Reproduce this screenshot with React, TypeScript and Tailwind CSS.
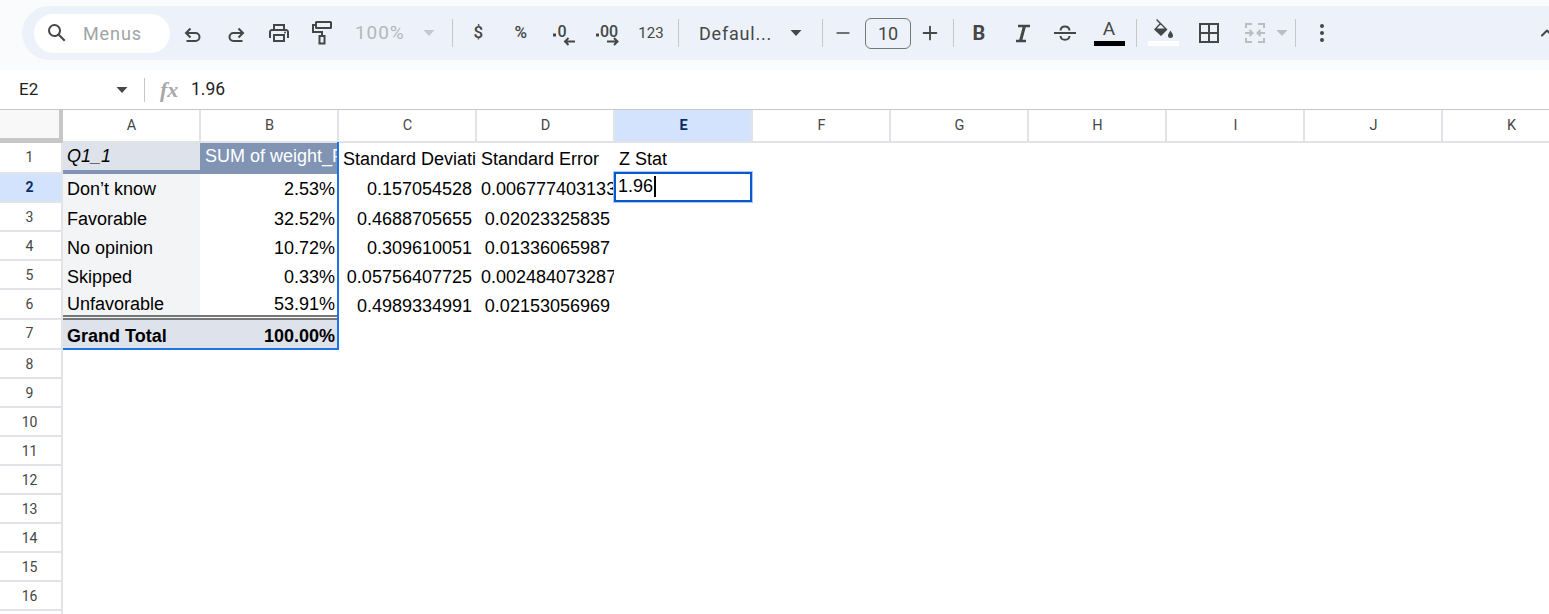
import React from 'react';
import { ChevronUp, Plus, Minus } from 'lucide-react';

const ICON = '#444746';
const DISABLED = '#b9bcc0';

const Sep = ({ className = '' }: { className?: string }) => <div className={`w-px h-[28px] bg-[#c7c7c7] shrink-0 ${className}`} />;

const Caret = ({ color = ICON, className = '' }: { color?: string; className?: string }) => (
  <svg width="12" height="6" viewBox="0 0 12 6" className={`shrink-0 ${className}`}>
    <path d="M0.5 0 H11.5 L6 6 Z" fill={color} />
  </svg>
);

const Btn = ({ className, children }: { className: string; children: React.ReactNode }) => (
  <div className={`h-full flex items-center justify-center shrink-0 ${className}`}>{children}</div>
);

const UndoIcon = ({ flip = false }: { flip?: boolean }) => (
  <svg width="20" height="20" viewBox="0 0 20 20" className={flip ? '-scale-x-100 mt-[3px]' : 'mt-[3px]'} fill="none" stroke={ICON} strokeWidth="2">
    <path d="M3.5 8 H12.5 A4 4 0 0 1 12.5 16 H3.5" />
    <path d="M7.5 3.5 L3 8 L7.5 12.5" />
  </svg>
);

const Toolbar = () => (
  <div className="ml-[22px] mt-[6px] h-[54px] bg-[#edf2fa] rounded-l-[27px] flex items-center pl-[12px] overflow-hidden text-[#444746] font-['Roboto',sans-serif]">
    <div className="w-[136px] h-[39px] bg-white rounded-full flex items-center pl-[11px] shrink-0">
      <svg width="24" height="24" viewBox="0 0 24 24" fill={ICON} className="shrink-0">
        <path d="M20.49 19l-5.73-5.73C15.53 12.2 16 10.91 16 9.5A6.5 6.5 0 1 0 9.5 16c1.41 0 2.7-.47 3.77-1.24L19 20.49 20.49 19zM5 9.5C5 7.01 7.01 5 9.5 5S14 7.01 14 9.5 11.99 14 9.5 14 5 11.99 5 9.5z" />
      </svg>
      <span className="ml-[14px] text-[18px] tracking-[0.9px] text-[#a0a3a6]">Menus</span>
    </div>
    <div className="w-px shrink-0" />
    <Btn className="w-[43px]"><UndoIcon /></Btn>
    <Btn className="w-[43px]"><UndoIcon flip /></Btn>
    <Btn className="w-[43px]">
      <svg width="24" height="24" viewBox="0 0 24 24" fill={ICON}>
        <path d="M19 8h-1V3H6v5H5c-1.66 0-3 1.34-3 3v6h4v4h12v-4h4v-6c0-1.66-1.34-3-3-3zM8 5h8v3H8V5zm8 14H8v-4h8v4zm2-2v-4H6v4H4v-6c0-.55.45-1 1-1h14c.55 0 1 .45 1 1v6h-2z" />
        <circle cx="18" cy="11.5" r="1" />
      </svg>
    </Btn>
    <Btn className="w-[43px]">
      <svg width="22" height="26" viewBox="0 0 22 26" fill="none" stroke={ICON} strokeWidth="2">
        <rect x="5" y="2" width="15" height="6" rx="0.5" />
        <path d="M5 5 H2 V12 H11 V16" />
        <rect x="8.5" y="16" width="5" height="7.5" />
      </svg>
    </Btn>
    <div className="w-[100px] h-full flex items-center pl-[12px] shrink-0">
      <span className="text-[19px] tracking-[0.9px] text-[#b4b7bb] w-[68px]">100%</span>
      <Caret color="#c4c7cb" />
    </div>
    <Sep className="ml-[9px]" />
    <div className="w-[4px] shrink-0" />
    <Btn className="w-[42.5px] text-[17px] font-medium">$</Btn>
    <Btn className="w-[42.5px] text-[17px] font-medium">%</Btn>
    <Btn className="w-[42.5px]">
      <svg width="26" height="26" viewBox="0 0 26 26" fill={ICON} stroke="none">
        <rect x="3" y="13.5" width="3" height="3" />
        <text x="7.5" y="16.5" fontSize="16" fontWeight="500" fontFamily="Roboto, sans-serif">0</text>
        <path d="M15 21.5 H25 M18.5 18 L15 21.5 L18.5 25" fill="none" stroke={ICON} strokeWidth="2" />
      </svg>
    </Btn>
    <Btn className="w-[42.5px]">
      <svg width="26" height="26" viewBox="0 0 26 26" fill={ICON} stroke="none">
        <rect x="3" y="13.5" width="3" height="3" />
        <text x="7" y="16.5" fontSize="16" fontWeight="500" fontFamily="Roboto, sans-serif">00</text>
        <path d="M14 21.5 H24.5 M21 18 L24.5 21.5 L21 25" fill="none" stroke={ICON} strokeWidth="2" />
      </svg>
    </Btn>
    <Btn className="w-[48px] text-[15px]">123</Btn>
    <Sep className="ml-[3px]" />
    <div className="w-[143px] h-full flex items-center pl-[20px] shrink-0">
      <span className="text-[18px] tracking-[0.8px] w-[91px] whitespace-nowrap">Defaul...</span>
      <Caret />
    </div>
    <Sep />
    <Btn className="w-[40px]"><Minus size={20} color={ICON} strokeWidth={2} /></Btn>
    <div className="ml-[2px] w-[46px] h-[31px] border border-[#747775] rounded-[6px] flex items-center justify-center text-[18px] shrink-0">10</div>
    <Btn className="w-[38px]"><Plus size={22} color={ICON} strokeWidth={2} /></Btn>
    <Sep className="ml-[4px]" />
    <Btn className="w-[50px] text-[20px] font-bold">B</Btn>
    <Btn className="w-[36px]">
      <svg width="20" height="20" viewBox="0 0 20 20" fill="none" stroke={ICON}>
        <path d="M6 3 H18 M4 18 H14" strokeWidth="2.4" />
        <path d="M12.5 3 L8.5 18" strokeWidth="3" />
      </svg>
    </Btn>
    <Btn className="w-[50px]">
      <svg width="24" height="24" viewBox="0 0 24 24" fill="none" stroke={ICON} strokeWidth="2">
        <path d="M1 12 H23" />
        <path d="M7.5 9.5 C8 4 16 4 16.5 9.5" />
        <path d="M7.5 15 C8 20 16 20 16.5 15" />
      </svg>
    </Btn>
    <Btn className="w-[38px]">
      <div className="w-[31px] flex flex-col items-center">
        <span className="text-[19px] leading-[22px] mt-[-2px]">A</span>
        <div className="w-full h-[5px] bg-black mt-[1px]" />
      </div>
    </Btn>
    <Sep className="ml-[8px]" />
    <Btn className="w-[52px]">
      <div className="w-[31px] flex flex-col items-center mt-[-3px]">
        <svg width="24" height="24" viewBox="0 0 24 24" fill={ICON}>
          <path d="M6 1 L8 3 L16.5 11.5 L10 18 L3 11.5 L8.5 5.5 L5 2 Z M8.5 7.5 L5.8 10.5 H13.5 L9.8 6.8 Z" fillRule="evenodd" />
          <path d="M19.5 12.5 C21 15 22 16 22 17.5 A2.5 2.5 0 0 1 17 17.5 C17 16 18 15 19.5 12.5 Z" />
        </svg>
        <div className="w-full h-[5px] bg-white mt-[-1px]" />
      </div>
    </Btn>
    <Btn className="w-[40px]">
      <svg width="22" height="22" viewBox="0 0 22 22" fill="none" stroke={ICON} strokeWidth="2">
        <rect x="2" y="2" width="18" height="18" />
        <path d="M11 2 V20 M2 11 H20" />
      </svg>
    </Btn>
    <div className="w-[66px] h-full flex items-center pl-[15px] shrink-0">
      <svg width="22" height="22" viewBox="0 0 22 22" fill="none" stroke={DISABLED} strokeWidth="2" className="shrink-0">
        <path d="M8 2 H2 V6 M2 16 V20 H8 M14 2 H20 V6 M20 16 V20 H14" />
        <path d="M1 11 H8 M5.5 8 L8.5 11 L5.5 14 M21 11 H14 M16.5 8 L13.5 11 L16.5 14" />
      </svg>
      <Caret color={DISABLED} className="ml-[10px]" />
    </div>
    <Sep />
    <Btn className="w-[52px]">
      <div className="flex flex-col gap-[3px]">
        <div className="size-[4px] rounded-full bg-[#444746]" />
        <div className="size-[4px] rounded-full bg-[#444746]" />
        <div className="size-[4px] rounded-full bg-[#444746]" />
      </div>
    </Btn>
    <div className="ml-auto -mr-[8px] shrink-0"><ChevronUp size={20} color={ICON} strokeWidth={2.4} /></div>
  </div>
);

const FormulaBar = () => (
  <div className="h-[40px] bg-white border-b border-[#c7c7c7] flex items-center font-['Roboto',sans-serif] text-[#1f1f1f] text-[17.5px]">
    <span className="ml-[19px] w-[97px] text-[17px]">E2</span>
    <Caret className="w-[12px]" />
    <div className="ml-[16px] w-px h-[24px] bg-[#c7c7c7]" />
    <span className="ml-[15px] w-[31px] text-[22px] italic font-['Liberation_Serif',serif] font-bold text-[#a6a8ab]">fx</span>
    <span>1.96</span>
  </div>
);

const COLS = ['A', 'B', 'C', 'D', 'E', 'F', 'G', 'H', 'I', 'J', 'K', 'L'];

const ColHeader = () => (
  <div className="flex h-[33px] font-['Roboto',sans-serif] text-[14.5px] text-[#444746]">
    <div className="w-[63px] shrink-0 pr-[4px] pb-[5px] bg-[#c7c7c7]">
      <div className="h-full bg-[#f8f8f8]" />
    </div>
    {COLS.map((c) => (
      <div
        key={c}
        className={`w-[138px] pl-[1px] shrink-0 flex items-center justify-center border-r-2 border-b-2 border-[#e1e3e6] ${
          c === 'E' ? 'bg-[#d3e3fd] font-bold text-[#0e2d62]' : 'bg-white'
        }`}
      >
        {c}
      </div>
    ))}
  </div>
);

type Cell = { text?: string; cls?: string };
type Row = { n: number; h: string; cells: Cell[] };

const ROWS: Row[] = [
  {
    n: 1,
    h: 'h-[31px]',
    cells: [
      { text: 'Q1_1', cls: 'italic bg-[#dee2ea] border-b-[4px] border-[#8294b4] pl-[4px] pb-[4px]' },
      { text: 'SUM of weight_Pct', cls: 'bg-[#8294b4] text-white pl-[5px] pb-[8px]' },
      { text: 'Standard Deviation', cls: 'pl-[5px] pb-[5px]' },
      { text: 'Standard Error', cls: 'pl-[5px] pb-[5px]' },
      { text: 'Z Stat', cls: 'pl-[5px] pb-[5px]' },
    ],
  },
  {
    n: 2,
    h: 'h-[29px]',
    cells: [
      { text: 'Don’t know', cls: 'bg-[#f3f4f6] pl-[4px] pb-[4px]' },
      { text: '2.53%', cls: 'justify-end pr-[3px] pb-[4px]' },
      { text: '0.157054528', cls: 'justify-end pr-[4px] pb-[4px]' },
      { text: '0.006777403133', cls: 'pl-[5px] pb-[4px]' },
    ],
  },
  {
    n: 3,
    h: 'h-[29px]',
    cells: [
      { text: 'Favorable', cls: 'bg-[#f3f4f6] pl-[4px] pb-[3px]' },
      { text: '32.52%', cls: 'justify-end pr-[3px] pb-[3px]' },
      { text: '0.4688705655', cls: 'justify-end pr-[4px] pb-[3px]' },
      { text: '0.02023325835', cls: 'justify-end pr-[4px] pb-[3px]' },
    ],
  },
  {
    n: 4,
    h: 'h-[29px]',
    cells: [
      { text: 'No opinion', cls: 'bg-[#f3f4f6] pl-[4px] pb-[3px]' },
      { text: '10.72%', cls: 'justify-end pr-[3px] pb-[3px]' },
      { text: '0.309610051', cls: 'justify-end pr-[4px] pb-[3px]' },
      { text: '0.01336065987', cls: 'justify-end pr-[4px] pb-[3px]' },
    ],
  },
  {
    n: 5,
    h: 'h-[29px]',
    cells: [
      { text: 'Skipped', cls: 'bg-[#f3f4f6] pl-[4px] pb-[3px]' },
      { text: '0.33%', cls: 'justify-end pr-[3px] pb-[3px]' },
      { text: '0.05756407725', cls: 'justify-end pr-[4px] pb-[3px]' },
      { text: '0.002484073287', cls: 'pl-[5px] pb-[3px]' },
    ],
  },
  {
    n: 6,
    h: 'h-[30px]',
    cells: [
      { text: 'Unfavorable', cls: 'bg-[#f3f4f6] pl-[4px] pb-[1px] border-b-[5px] border-double border-[#777777]' },
      { text: '53.91%', cls: 'justify-end pr-[3px] pb-[1px] border-b-[5px] border-double border-[#777777]' },
      { text: '0.4989334991', cls: 'justify-end pr-[4px] pb-[4px]' },
      { text: '0.02153056969', cls: 'justify-end pr-[4px] pb-[4px]' },
    ],
  },
  {
    n: 7,
    h: 'h-[30px]',
    cells: [
      { text: 'Grand Total', cls: 'bg-[#dee2ea] font-bold pl-[4px] pb-[4px]' },
      { text: '100.00%', cls: 'bg-[#dee2ea] font-bold justify-end pr-[3px] pb-[4px]' },
    ],
  },
  ...[8, 9, 10, 11, 12, 13, 14, 15, 16, 17].map((n) => ({ n, h: 'h-[29px]', cells: [] as Cell[] })),
];

const labelNudge = (n: number) => {
  if (n === 1 || n === 2 || n === 6) return '';
  if (n === 7) return 'pb-[2px]';
  return 'pt-[2px]';
};

const SheetRow = ({ row }: { row: Row }) => (
  <div className={`flex ${row.h}`}>
    <div
      className={`w-[63px] shrink-0 flex items-center justify-center border-r-2 border-b-2 border-[#e1e3e6] pr-[2px] font-['Roboto',sans-serif] text-[14px] ${labelNudge(row.n)} ${
        row.n === 2 ? 'bg-[#d3e3fd] font-bold text-[#0e2d62]' : 'bg-white text-[#444746]'
      }`}
    >
      {row.n}
    </div>
    {COLS.map((c, i) => (
      <div key={c} className={`${i === 0 ? 'w-[137px]' : 'w-[138px]'} shrink-0 flex items-end overflow-hidden whitespace-nowrap text-[18px] leading-[20px] text-black font-['Liberation_Sans',sans-serif] ${row.cells[i]?.cls ?? ''}`}>
        {row.cells[i]?.text}
      </div>
    ))}
  </div>
);

const Sheet = () => (
  <div className="relative">
    <ColHeader />
    {ROWS.map((r) => (
      <SheetRow key={r.n} row={r} />
    ))}
    {/* range highlight left by the pivot selection */}
    <div className="absolute left-[63px] top-[32px] w-[276px] h-[208px] border-r-2 border-b-2 border-[#1a73e8]" />
    <div className="absolute left-[613px] top-[61px] w-[140px] h-[32px] border border-[#a8c7fa] bg-white">
      <div className="h-full border-2 border-[#0b57d0] bg-white flex items-center pl-[2px] pb-[2px] text-[18px] text-black font-['Liberation_Sans',sans-serif]">
        1.96
        <div className="w-[2px] h-[21px] bg-black ml-[1px]" />
      </div>
    </div>
  </div>
);

export default function App() {
  return (
    <div className="h-[614px] w-[1549px] overflow-hidden bg-white">
      <div className="h-[70px] bg-[#f9fbfd] overflow-hidden">
        <Toolbar />
      </div>
      <FormulaBar />
      <Sheet />
    </div>
  );
}
